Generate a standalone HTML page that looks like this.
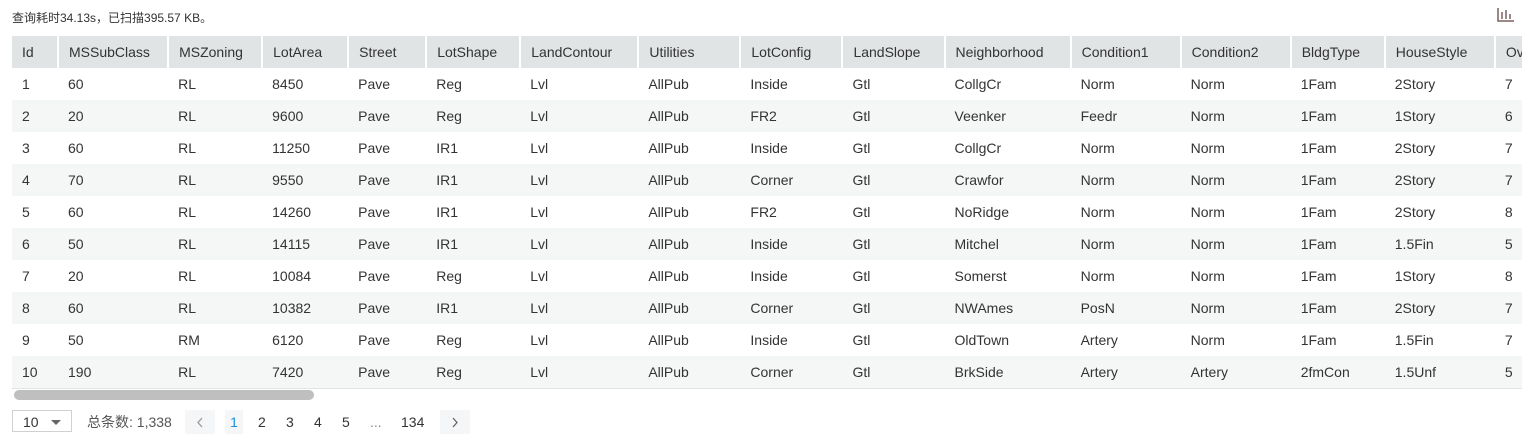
<!DOCTYPE html>
<html><head><meta charset="utf-8"><style>
body{margin:0;width:1522px;height:446px;overflow:hidden;background:#fff;font-family:"Liberation Sans","Noto Sans CJK SC",sans-serif;color:#333;}
.top{position:absolute;left:12px;top:9px;font-size:12px;color:#333}
.icon{position:absolute;left:1497px;top:7px}
.wrap{position:absolute;left:12px;top:36px;width:1510px;overflow:hidden}
table{border-collapse:collapse;table-layout:fixed;font-size:14px;width:1560px}
th{background:#e1e4e5;font-weight:normal;text-align:left;height:32px;padding:0 0 0 10px;border-right:2px solid #fff;color:#333;white-space:nowrap}
td{height:32px;padding:0 0 0 10px;white-space:nowrap;color:#333}
tr:nth-child(even) td{background:#f5f7f7}
tbody tr:last-child td{border-bottom:1px solid #e1e4e5}
.sb{position:absolute;left:14px;top:390px;width:300px;height:10px;border-radius:5px;background:#bfbfbf}
.pg{position:absolute;top:410px;font-size:14px;height:24px;line-height:24px}
.sel{left:12px;height:22px;border:1px solid #d0d0d0;padding-left:10px;box-sizing:border-box;line-height:22px;width:60px}
.btn{background:#f5f6f7;width:30px;text-align:center}
.btn svg{position:absolute;left:11px;top:7px}
</style></head><body>
<div class="top">查询耗时34.13s，已扫描395.57 KB。</div>
<svg class="icon" width="18" height="16" viewBox="0 0 18 16"><path d="M1 1V14H17" stroke="#7a6060" stroke-width="1.5" fill="none"/><path d="M5 5V12M9 3V12M13 7V12" stroke="#7a6060" stroke-width="1.5"/></svg>
<div class="wrap"><table>
<colgroup><col style="width:46px"><col style="width:110px"><col style="width:94px"><col style="width:86px"><col style="width:78px"><col style="width:94px"><col style="width:118px"><col style="width:102px"><col style="width:102px"><col style="width:102px"><col style="width:126px"><col style="width:110px"><col style="width:110px"><col style="width:94px"><col style="width:110px"><col style="width:76px"></colgroup>
<thead><tr><th>Id</th><th>MSSubClass</th><th>MSZoning</th><th>LotArea</th><th>Street</th><th>LotShape</th><th>LandContour</th><th>Utilities</th><th>LotConfig</th><th>LandSlope</th><th>Neighborhood</th><th>Condition1</th><th>Condition2</th><th>BldgType</th><th>HouseStyle</th><th>OverallQual</th></tr></thead>
<tbody>
<tr><td>1</td><td>60</td><td>RL</td><td>8450</td><td>Pave</td><td>Reg</td><td>Lvl</td><td>AllPub</td><td>Inside</td><td>Gtl</td><td>CollgCr</td><td>Norm</td><td>Norm</td><td>1Fam</td><td>2Story</td><td>7</td></tr>
<tr><td>2</td><td>20</td><td>RL</td><td>9600</td><td>Pave</td><td>Reg</td><td>Lvl</td><td>AllPub</td><td>FR2</td><td>Gtl</td><td>Veenker</td><td>Feedr</td><td>Norm</td><td>1Fam</td><td>1Story</td><td>6</td></tr>
<tr><td>3</td><td>60</td><td>RL</td><td>11250</td><td>Pave</td><td>IR1</td><td>Lvl</td><td>AllPub</td><td>Inside</td><td>Gtl</td><td>CollgCr</td><td>Norm</td><td>Norm</td><td>1Fam</td><td>2Story</td><td>7</td></tr>
<tr><td>4</td><td>70</td><td>RL</td><td>9550</td><td>Pave</td><td>IR1</td><td>Lvl</td><td>AllPub</td><td>Corner</td><td>Gtl</td><td>Crawfor</td><td>Norm</td><td>Norm</td><td>1Fam</td><td>2Story</td><td>7</td></tr>
<tr><td>5</td><td>60</td><td>RL</td><td>14260</td><td>Pave</td><td>IR1</td><td>Lvl</td><td>AllPub</td><td>FR2</td><td>Gtl</td><td>NoRidge</td><td>Norm</td><td>Norm</td><td>1Fam</td><td>2Story</td><td>8</td></tr>
<tr><td>6</td><td>50</td><td>RL</td><td>14115</td><td>Pave</td><td>IR1</td><td>Lvl</td><td>AllPub</td><td>Inside</td><td>Gtl</td><td>Mitchel</td><td>Norm</td><td>Norm</td><td>1Fam</td><td>1.5Fin</td><td>5</td></tr>
<tr><td>7</td><td>20</td><td>RL</td><td>10084</td><td>Pave</td><td>Reg</td><td>Lvl</td><td>AllPub</td><td>Inside</td><td>Gtl</td><td>Somerst</td><td>Norm</td><td>Norm</td><td>1Fam</td><td>1Story</td><td>8</td></tr>
<tr><td>8</td><td>60</td><td>RL</td><td>10382</td><td>Pave</td><td>IR1</td><td>Lvl</td><td>AllPub</td><td>Corner</td><td>Gtl</td><td>NWAmes</td><td>PosN</td><td>Norm</td><td>1Fam</td><td>2Story</td><td>7</td></tr>
<tr><td>9</td><td>50</td><td>RM</td><td>6120</td><td>Pave</td><td>Reg</td><td>Lvl</td><td>AllPub</td><td>Inside</td><td>Gtl</td><td>OldTown</td><td>Artery</td><td>Norm</td><td>1Fam</td><td>1.5Fin</td><td>7</td></tr>
<tr><td>10</td><td>190</td><td>RL</td><td>7420</td><td>Pave</td><td>Reg</td><td>Lvl</td><td>AllPub</td><td>Corner</td><td>Gtl</td><td>BrkSide</td><td>Artery</td><td>Artery</td><td>2fmCon</td><td>1.5Unf</td><td>5</td></tr>
</tbody></table></div>
<div class="sb"></div>
<div class="pg sel">10<span style="position:absolute;left:38px;top:9px;border:5px solid transparent;border-top:5px solid #666;border-bottom:0"></span></div>
<div class="pg" style="left:87px;color:#555">总条数: 1,338</div>
<div class="pg btn" style="left:185px"><svg width="8" height="11" viewBox="0 0 8 11"><path d="M6 1L2 5.5L6 10" stroke="#999" stroke-width="1.3" fill="none"/></svg></div>
<div class="pg" style="left:225px;width:18px;text-align:center;background:#f5f6f7;color:#1e8fe1">1</div>
<div class="pg" style="left:258px">2</div>
<div class="pg" style="left:286px">3</div>
<div class="pg" style="left:314px">4</div>
<div class="pg" style="left:342px">5</div>
<div class="pg" style="left:370px;color:#888">...</div>
<div class="pg" style="left:401px">134</div>
<div class="pg btn" style="left:440px"><svg width="8" height="11" viewBox="0 0 8 11"><path d="M2 1L6 5.5L2 10" stroke="#666" stroke-width="1.3" fill="none"/></svg></div>
</body></html>
